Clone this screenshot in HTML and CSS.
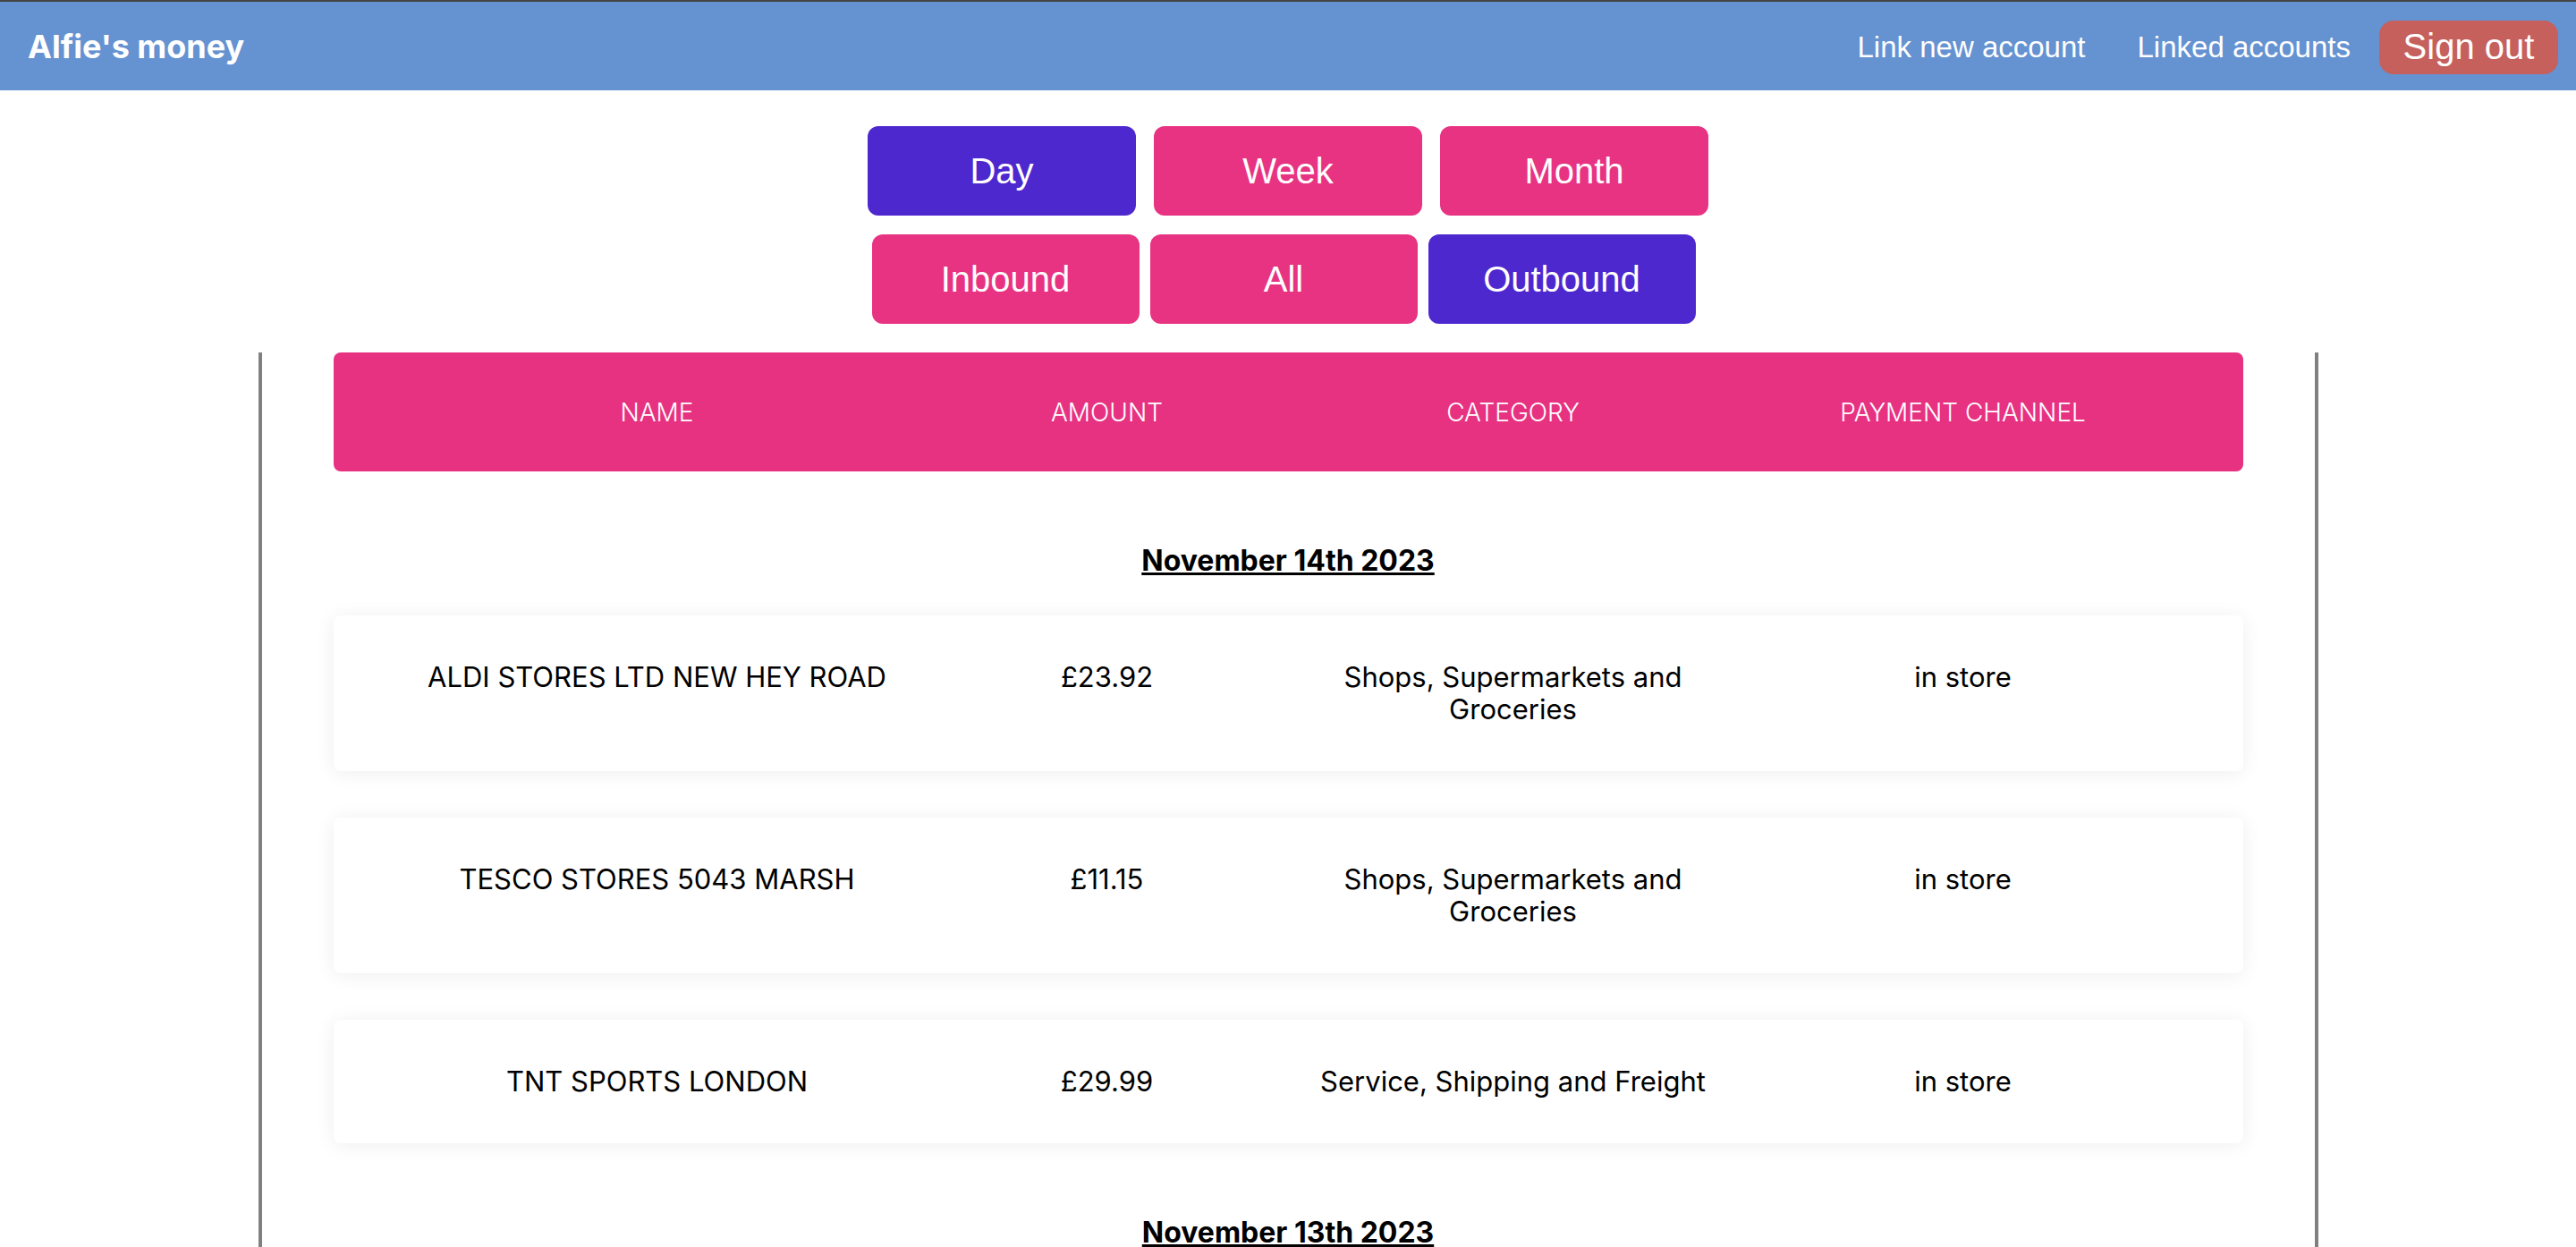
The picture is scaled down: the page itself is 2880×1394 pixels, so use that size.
FILE: index.html
```html
<!DOCTYPE html>
<html lang="en">
<head>
<meta charset="utf-8">
<title>Alfie's money</title>
<link rel="stylesheet" href="styles.css">
</head>
<body>
<header class="topbar">
  <div class="brand">Alfie's money</div>
  <nav class="nav">
    <a class="nav-link" href="#">Link new account</a>
    <a class="nav-link" href="#">Linked accounts</a>
    <button class="signout">Sign out</button>
  </nav>
</header>

<div class="filters">
  <div class="filter-row">
    <button class="fbtn active">Day</button>
    <button class="fbtn">Week</button>
    <button class="fbtn">Month</button>
  </div>
  <div class="filter-row row-two">
    <button class="fbtn">Inbound</button>
    <button class="fbtn">All</button>
    <button class="fbtn active">Outbound</button>
  </div>
</div>

<main class="panel">
  <div class="thead">
    <div class="cell">NAME</div>
    <div class="cell">AMOUNT</div>
    <div class="cell">CATEGORY</div>
    <div class="cell">PAYMENT CHANNEL</div>
  </div>

  <section class="day-group">
    <h2 class="date">November 14th 2023</h2>
    <div class="cards">
      <div class="card">
        <div class="cell">ALDI STORES LTD NEW HEY ROAD</div>
        <div class="cell">£23.92</div>
        <div class="cell">Shops, Supermarkets and Groceries</div>
        <div class="cell">in store</div>
      </div>
      <div class="card">
        <div class="cell">TESCO STORES 5043 MARSH</div>
        <div class="cell">£11.15</div>
        <div class="cell">Shops, Supermarkets and Groceries</div>
        <div class="cell">in store</div>
      </div>
      <div class="card">
        <div class="cell">TNT SPORTS LONDON</div>
        <div class="cell">£29.99</div>
        <div class="cell">Service, Shipping and Freight</div>
        <div class="cell">in store</div>
      </div>
    </div>
  </section>

  <section class="day-group">
    <h2 class="date">November 13th 2023</h2>
  </section>
</main>
</body>
</html>
```

FILE: styles.css
```css
* { box-sizing: border-box; }

html, body {
  margin: 0;
  padding: 0;
  background: #ffffff;
}

body {
  font-family: Inter, "Noto Sans", "DejaVu Sans", sans-serif;
  color: #000000;
}

.topbar {
  display: flex;
  align-items: center;
  justify-content: space-between;
  height: 101px;
  border-top: 2px solid #454545;
  background: #6592d1;
  padding: 0 20px 0 31px;
}

.brand {
  font-family: Inter, "Liberation Sans", sans-serif;
  font-weight: 700;
  font-size: 36px;
  color: #ffffff;
}

.nav {
  display: flex;
  align-items: center;
  gap: 32px;
}

.nav-link {
  font-family: "Liberation Sans", Arial, sans-serif;
  font-size: 33px;
  color: #ffffff;
  text-decoration: none;
  margin-top: 2px;
}

.nav-link + .nav-link {
  margin-left: 26px;
}

.signout {
  font-family: "Liberation Sans", Arial, sans-serif;
  font-size: 40px;
  color: #ffffff;
  background: #c6605c;
  border: none;
  border-radius: 16px;
  height: 60px;
  width: 200px;
  padding: 0;
  margin-top: 2px;
}

.filters {
  display: flex;
  flex-direction: column;
  gap: 21px;
  padding-top: 40px;
}

.filter-row {
  display: flex;
  justify-content: center;
  gap: 20px;
}

.filter-row.row-two {
  gap: 12px;
  padding-right: 10px;
}

.fbtn {
  font-family: "Liberation Sans", Arial, sans-serif;
  font-size: 40px;
  color: #ffffff;
  background: #e83383;
  border: none;
  border-radius: 12px;
  width: 300px;
  height: 100px;
  padding: 0;
}

.filter-row.row-two .fbtn {
  width: 299px;
}

.fbtn.active {
  background: #4e28cf;
}

.panel {
  width: 2303px;
  margin: 32px auto 0;
  border-left: 4px solid #808080;
  border-right: 4px solid #808080;
  padding: 0 80px 40px;
}

.thead,
.card {
  display: grid;
  grid-template-columns: 552px 454px 454px 552px;
  padding-left: 86px;
  padding-right: 36px;
  text-align: center;
}

.thead {
  height: 133px;
  align-items: center;
  background: #e73282;
  border-radius: 8px;
  color: #ffffff;
  font-size: 28px;
  font-weight: 300;
}

.day-group {
  padding-top: 80px;
}

.date {
  margin: 0 0 42px;
  text-align: center;
  font-size: 32px;
  font-weight: 700;
  line-height: normal;
  text-decoration: underline;
  text-decoration-thickness: 3px;
  text-underline-offset: 2px;
}

.cards {
  display: flex;
  flex-direction: column;
  gap: 52px;
}

.card {
  align-items: start;
  padding-top: 51px;
  padding-bottom: 51px;
  background: #ffffff;
  border-radius: 8px;
  box-shadow: 0 2px 22px rgba(0, 0, 0, 0.07);
  font-size: 31px;
  line-height: 36px;
}
```
